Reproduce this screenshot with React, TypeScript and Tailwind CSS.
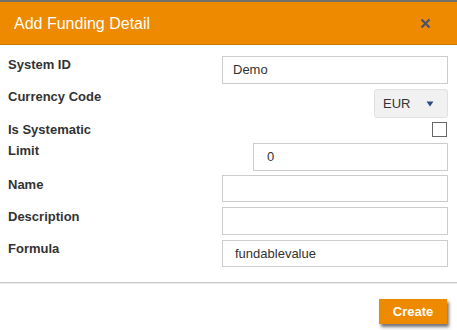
import React from "react";

const font = { fontFamily: '"Liberation Sans", Arial, sans-serif' };

function Label({ children, pt }: { children: React.ReactNode; pt: string }) {
  return <div className={`text-[13px] font-bold text-[#333] leading-[15px] ${pt}`}>{children}</div>;
}

export default function App() {
  return (
    <div className="w-[457px] h-[330px] bg-white flex flex-col overflow-hidden" style={font}>
      <div className="h-[2px] bg-[#707070]" />
      <div className="h-[43px] bg-[#ee8a00] border-b border-[#c97700] flex items-center justify-between pl-[14px] pr-[26px]">
        <span className="text-white text-[16px] leading-none pt-[1px]">Add Funding Detail</span>
        <svg width="11" height="11" viewBox="0 0 11 11" className="mt-[1px]">
          <path d="M1.5 1.5 L9.5 9.5 M9.5 1.5 L1.5 9.5" stroke="#4a5070" strokeWidth="2.2" strokeLinecap="butt" />
        </svg>
      </div>

      <div className="flex flex-col pl-[8px] pr-[9px] pt-[11px]">
        <div className="flex justify-between items-start">
          <Label pt="pt-[1px]">System ID</Label>
          <div className="w-[226px] h-[28px] border border-[#ccc] flex items-center pl-[10px] text-[13px] text-[#333]">Demo</div>
        </div>
        <div className="flex justify-between items-start mt-[5px]">
          <Label pt="pt-[0px]">Currency Code</Label>
          <div className="w-[74px] h-[29px] rounded-[3px] border border-[#e0e0e0] bg-[#f1f1f1] flex items-center pl-[8px] pr-[13px] justify-between text-[13px] text-[#333]">
            <span>EUR</span>
            <svg width="8" height="6" viewBox="0 0 8 6">
              <path d="M0.5 0.5 L7.5 0.5 L4 5.5 Z" fill="#2d4b86" />
            </svg>
          </div>
        </div>
        <div className="flex justify-between items-start mt-[4px] pr-[1px] h-[17px]">
          <Label pt="pt-[0px]">Is Systematic</Label>
          <div className="w-[15px] h-[15px] border-[1.5px] border-[#666] bg-white" />
        </div>
        <div className="flex justify-between items-start mt-[4px]">
          <Label pt="pt-[0px]">Limit</Label>
          <div className="w-[195px] h-[28px] border border-[#ccc] flex items-center pl-[13px] text-[13px] text-[#333]">0</div>
        </div>
        <div className="flex justify-between items-start mt-[4px]">
          <Label pt="pt-[2px]">Name</Label>
          <div className="w-[226px] h-[27px] border border-[#ccc]" />
        </div>
        <div className="flex justify-between items-start mt-[5px]">
          <Label pt="pt-[2px]">Description</Label>
          <div className="w-[226px] h-[28px] border border-[#ccc]" />
        </div>
        <div className="flex justify-between items-start mt-[5px]">
          <Label pt="pt-[1px]">Formula</Label>
          <div className="w-[226px] h-[27px] border border-[#ccc] flex items-center pl-[12px] text-[13px] text-[#333]">fundablevalue</div>
        </div>
      </div>

      <div className="mt-[15px] h-[2px] border-t border-[#c8c8c8] bg-[#ececec]" />

      <div className="flex justify-end pr-[10px] pt-[15px]">
        <button className="w-[68px] h-[25px] bg-[#ee8a00] text-white text-[13px] font-bold shadow-[2px_3px_3px_rgba(0,0,0,0.55)]">
          Create
        </button>
      </div>
    </div>
  );
}
